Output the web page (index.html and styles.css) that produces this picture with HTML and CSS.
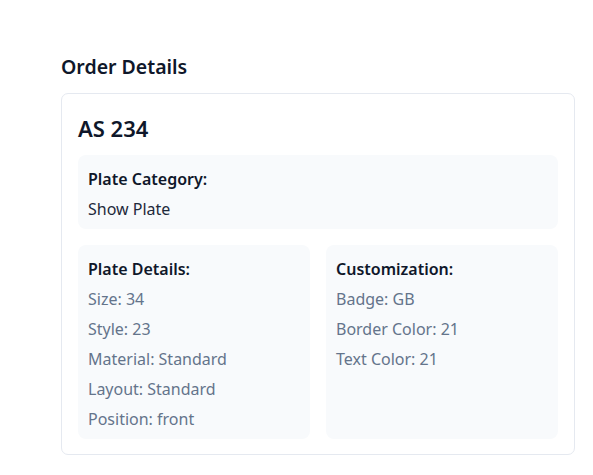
FILE: index.html
```html
<!DOCTYPE html>
<html lang="en">
<head>
<meta charset="utf-8">
<title>Order Details</title>
<link rel="stylesheet" href="styles.css">
</head>
<body>
<main class="page">
  <h2 class="page-title">Order Details</h2>
  <section class="card">
    <h3 class="plate-number">AS 234</h3>
    <div class="panel">
      <div class="panel-heading">Plate Category:</div>
      <div class="panel-value dark">Show Plate</div>
    </div>
    <div class="grid">
      <div class="panel">
        <div class="panel-heading">Plate Details:</div>
        <div class="panel-value">Size: 34</div>
        <div class="panel-value">Style: 23</div>
        <div class="panel-value">Material: Standard</div>
        <div class="panel-value">Layout: Standard</div>
        <div class="panel-value">Position: front</div>
      </div>
      <div class="panel">
        <div class="panel-heading">Customization:</div>
        <div class="panel-value">Badge: GB</div>
        <div class="panel-value">Border Color: 21</div>
        <div class="panel-value">Text Color: 21</div>
      </div>
    </div>
  </section>
</main>
</body>
</html>
```

FILE: styles.css
```css
* {
  box-sizing: border-box;
}

html, body {
  margin: 0;
  padding: 0;
  background: #ffffff;
}

body {
  font-family: "Noto Sans", "Open Sans", sans-serif;
  color: #0f172a;
}

.page {
  padding: 53px 18px 20px 61px;
}

.page-title {
  margin: 0 0 12px;
  font-size: 19.5px;
  line-height: 28px;
  font-weight: 600;
  color: #0f172a;
}

.card {
  border: 1px solid #e5e9f0;
  border-radius: 7px;
  padding: 20px 16px 15px;
  display: flex;
  flex-direction: column;
  gap: 16px;
}

.plate-number {
  margin: 0 0 -3px;
  font-size: 22px;
  line-height: 28px;
  font-weight: 600;
  color: #0f172a;
}

.panel {
  background: #f8fafc;
  border-radius: 8px;
  padding: 12px 10px 8px;
  display: flex;
  flex-direction: column;
  gap: 6px;
}

.panel-heading {
  font-size: 16px;
  line-height: 24px;
  font-weight: 600;
  color: #0f172a;
}

.panel-value {
  font-size: 16px;
  line-height: 24px;
  color: #64748b;
}

.panel-value.dark {
  color: #1e293b;
}

.grid {
  display: grid;
  grid-template-columns: 1fr 1fr;
  gap: 16px;
}
```
